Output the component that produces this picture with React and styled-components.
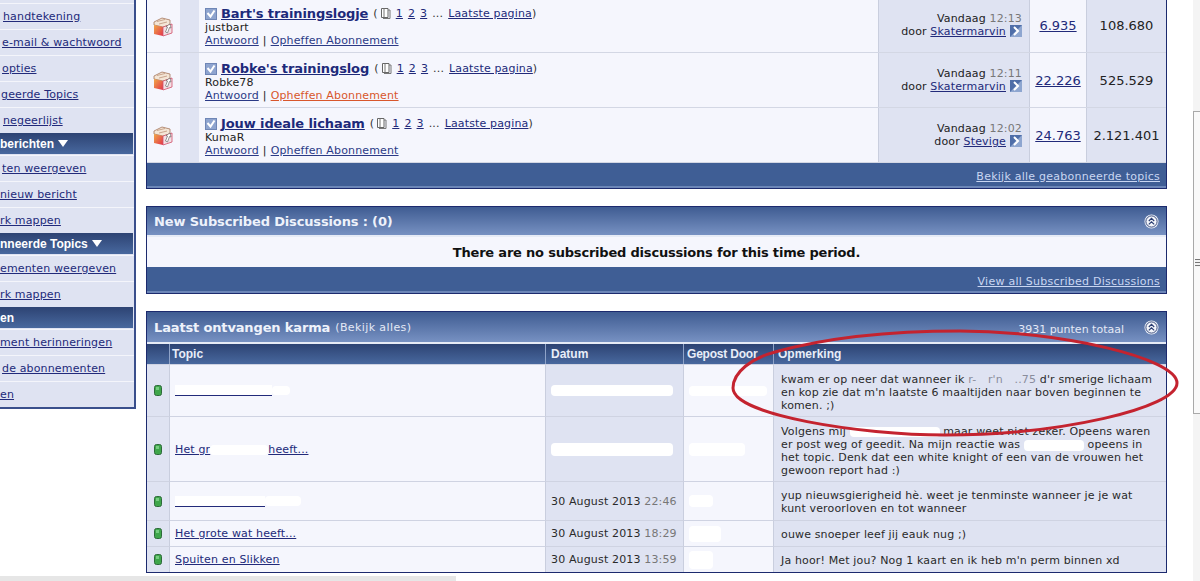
import React from 'react';
import styled, { createGlobalStyle } from 'styled-components';

const Global = createGlobalStyle`
  html, body { margin: 0; padding: 0; background: #fff; overflow: hidden; }
  body { font-family: "DejaVu Sans", Verdana, sans-serif; font-size: 11px; letter-spacing: 0.15px; color: #222; }
`;

const Page = styled.div`
  position: relative;
  width: 1200px;
  height: 581px;
  overflow: hidden;
  display: flex;
  align-items: flex-start;
  background: #fff;
`;

const Sidebar = styled.nav`
  width: 136px;
  flex: none;
  height: 409px;
  box-sizing: border-box;
  background: #dfe3f2;
  border-right: 2px solid #3a4f8c;
  border-bottom: 2px solid #3a4f8c;
  display: flex;
  flex-direction: column;
  padding-top: 3px;
`;

const SideLink = styled.a`
  height: 26px;
  flex: none;
  box-sizing: border-box;
  border-top: 1px solid #f4f5fb;
  padding: 6px 0 0 ${p => p.$indent || 0}px;
  color: #222a7a;
  text-decoration: underline;
  white-space: nowrap;
  overflow: hidden;
`;

const SideHead = styled.div`
  height: 21px;
  flex: none;
  margin: 0 1px 1px 0;
  box-sizing: border-box;
  padding-top: 4px;
  background: linear-gradient(#2d4373, #48689e);
  color: #fff;
  font-weight: bold;
  font-family: "Liberation Sans", Arial, sans-serif;
  font-size: 12px;
  letter-spacing: 0;
  white-space: nowrap;
  display: flex;
  align-items: flex-start;
`;

const Triangle = styled.span`
  width: 0;
  height: 0;
  margin: 3px 0 0 4px;
  border-left: 5px solid transparent;
  border-right: 5px solid transparent;
  border-top: 7px solid #fff;
`;

const Main = styled.main`
  width: 1021px;
  margin-left: 10px;
  flex: none;
  display: flex;
  flex-direction: column;
`;

const Panel = styled.section`
  border: 1px solid #1c2a6e;
  border-top-width: ${p => (p.$cut ? 0 : 1)}px;
  margin-bottom: ${p => p.$gap || 0}px;
  background: #f5f6fd;
`;

const TopicRow = styled.div`
  display: grid;
  grid-template-columns: 33px 19px 679px 151px 57px 80px;
  height: ${p => p.$h}px;
  border-bottom: 1px solid #d3d7e4;
  box-sizing: border-box;
`;

const Cell = styled.div`
  background: ${p => (p.$alt ? '#dfe3f2' : '#f5f6fd')};
  border-left: ${p => (p.$line ? '1px solid #c9cede' : 'none')};
  box-sizing: border-box;
  min-width: 0;
`;

const IconCell = styled(Cell)`
  display: flex;
  align-items: center;
  justify-content: center;
  padding: 2px 1px 0 0;
`;

const TitleCell = styled(Cell)`
  padding: ${p => p.$top}px 0 0 6px;
  line-height: 13px;
`;

const TitleLine = styled.div`
  display: flex;
  align-items: center;
  height: 15px;
  white-space: nowrap;
`;

const TopicTitle = styled.a`
  font-size: 13px;
  font-weight: bold;
  letter-spacing: -0.1px;
  color: #1d2a7a;
  text-decoration: underline;
  margin: 0 5px 0 4px;
`;

const Pages = styled.span`
  display: inline-flex;
  align-items: center;
  gap: 5px;
  color: #333;
  a { color: #222a7a; text-decoration: underline; }
`;

const RowLink = styled.a`
  color: ${p => (p.$hover ? '#d8562c' : '#2b3a86')};
  text-decoration: underline;
`;

const Sep = styled.span`
  margin: 0 4px;
  color: #222;
`;

const LastPost = styled(Cell)`
  text-align: right;
  padding: ${p => p.$top}px 7px 0 0;
  line-height: 13px;
  white-space: nowrap;
  a { color: #222a7a; text-decoration: underline; }
`;

const Time = styled.span`
  color: #777;
`;

const Num = styled(Cell)`
  display: flex;
  align-items: center;
  justify-content: center;
  padding: ${p => (p.$down ? '1px 0 0' : '0 0 1px')};
  font-size: 13px;
  letter-spacing: 0;
  a { color: #222a7a; text-decoration: underline; }
`;

const BlueFoot = styled.div`
  height: ${p => p.$h}px;
  box-sizing: border-box;
  background: #3f5e95;
  border-bottom: 2px solid #6c86b8;
  display: flex;
  align-items: center;
  justify-content: flex-end;
  padding: ${p => p.$top}px 6px 0 0;
  letter-spacing: 0.25px;
  a { color: #c9d6f2; text-decoration: underline; }
`;

const PanelHead = styled.header`
  height: ${p => p.$h}px;
  box-sizing: border-box;
  background: linear-gradient(#3f5c92, #7791c2);
  border-bottom: 2px solid #e6ebf6;
  display: flex;
  align-items: center;
  padding: ${p => p.$top || 0}px 7px 0;
  color: #fff;
`;

const HeadTitle = styled.strong`
  font-size: 13px;
  letter-spacing: -0.15px;
  color: #eef2fb;
`;

const HeadNote = styled.span`
  font-size: 11px;
  letter-spacing: 0.4px;
  color: #e4e9f6;
  margin-left: 5px;
`;

const HeadRight = styled.span`
  margin: 4px 20px 0 auto;
  letter-spacing: 0;
  color: #e4e9f6;
`;

const HeadTool = styled.span`
  margin-left: auto;
  display: flex;
`;

const EmptyMsg = styled.div`
  height: 30px;
  display: flex;
  align-items: center;
  justify-content: center;
  font-size: 13px;
  font-weight: bold;
  letter-spacing: -0.2px;
  color: #111;
  background: #f5f6fd;
`;

const KarmaGrid = styled.div`
  display: grid;
  grid-template-columns: 22px 376px 138px 90px 393px;
`;

const Th = styled.div`
  height: 20px;
  box-sizing: border-box;
  padding: 3px 0 0 ${p => p.$pad || 3}px;
  border-left: ${p => (p.$first ? 'none' : '1px solid #8fa3c8')};
  background: linear-gradient(#2d4373, #48689e);
  font-family: "Liberation Sans", Arial, sans-serif;
  font-size: 12px;
  font-weight: bold;
  letter-spacing: ${p => p.$tight || 0}px;
  color: #e8edf8;
  white-space: nowrap;
  overflow: hidden;
`;

const Td = styled.div`
  height: ${p => p.$h}px;
  box-sizing: border-box;
  background: ${p => (p.$alt ? '#dfe3f2' : '#f5f6fd')};
  border-top: 1px solid #cfd3e2;
  border-left: ${p => (p.$first ? 'none' : '1px solid #c9cede')};
  display: flex;
  align-items: center;
  padding: 0 5px;
  white-space: nowrap;
  overflow: hidden;
  color: #2a2a2a;
`;

const Status = styled(Td)`
  padding: 0 0 0 7px;
`;

const Comment = styled(Td)`
  display: block;
  white-space: normal;
  line-height: 13px;
  padding: ${p => p.$top}px 5px 0 7px;
`;

const TopicLink = styled.a`
  color: #222a7a;
  text-decoration: underline;
`;

const Redact = styled.span`
  display: inline-block;
  width: ${p => p.$w}px;
  height: ${p => p.$h || 11}px;
  background: #fff;
  border-radius: 4px;
  vertical-align: middle;
`;

const UnderlinedRedact = styled(Redact)`
  border-radius: 0;
  border-bottom: 1px solid #222a7a;
`;

const Faint = styled.span`
  color: #8a8d9c;
  word-spacing: 8px;
`;

const ScrollTrack = styled.div`
  position: absolute;
  left: 1193px;
  top: 0;
  bottom: 0;
  width: 7px;
  background: #f4f4f4;
`;

const ScrollThumb = styled.div`
  position: absolute;
  left: 0;
  top: 111px;
  width: 7px;
  height: 303px;
  box-sizing: border-box;
  background: #f9f9f9;
  border: 1px solid #a9a9a9;
  border-right: 0;
`;

const ScrollGrip = styled.div`
  position: absolute;
  left: 1px;
  top: 147px;
  width: 5px;
  height: 8px;
  background: repeating-linear-gradient(#777 0 1px, #f3f3f3 1px 3px);
`;

const ScrollH = styled.div`
  position: absolute;
  left: 0;
  top: 576px;
  width: 456px;
  height: 5px;
  background: #e6e6e6;
`;

const Ellipse = styled.svg`
  position: absolute;
  left: 0;
  top: 0;
  width: 1200px;
  height: 581px;
  pointer-events: none;
`;

function TopicIcon() {
  return (
    <svg width="20" height="20" viewBox="0 0 20 20">
      <defs>
        <linearGradient id="boxFace" x1="0" y1="0" x2="1" y2="1">
          <stop offset="0" stopColor="#f0a848" />
          <stop offset="1" stopColor="#e2334a" />
        </linearGradient>
      </defs>
      <path d="M1 5 L9 1 L17 3 L17 8 L10 10 L1 8 Z" fill="#f4e6d6" stroke="#a5765c" strokeWidth="0.8" />
      <path d="M4 4.5 L12 2.5 M6 7 L14 5" stroke="#b78a6e" strokeWidth="0.7" />
      <path d="M1 8 L10 10 L10 19 L1 17 Z" fill="url(#boxFace)" />
      <path d="M10 10 L19 7 L19 16 L10 19 Z" fill="#f3dfe4" stroke="#d0506a" strokeWidth="0.8" />
      <path d="M12.5 15 L14.5 10 L13 9.5 L17 7 L18 11 L16.5 10.5 L14.5 16 Z" fill="#fff" stroke="#555" strokeWidth="0.6" />
    </svg>
  );
}

function CheckBox() {
  return (
    <svg width="12" height="12" viewBox="0 0 12 12">
      <rect x="0.5" y="0.5" width="11" height="11" fill="#8ea4cf" stroke="#6f86b6" />
      <path d="M2.5 5 L5.5 8.5 L9.5 2.5" fill="none" stroke="#fff" strokeWidth="2" />
    </svg>
  );
}

function PagesIcon() {
  return (
    <svg width="12" height="12" viewBox="0 0 12 12" style={{ verticalAlign: -2, marginLeft: 1 }}>
      <path d="M2.5 1.5 H9 V10.5 H2.5 Z" fill="#fff" stroke="#666" />
      <path d="M5 1.5 V10.5 M9 3 H11 V11.5 H4" fill="none" stroke="#777" />
    </svg>
  );
}

function GoIcon() {
  return (
    <svg width="12" height="12" viewBox="0 0 12 12" style={{ verticalAlign: -2, marginLeft: 4 }}>
      <rect width="12" height="12" fill="#4f6ea8" />
      <path d="M0 12 L12 0 V12 Z" fill="#8ea6d0" />
      <path d="M4 2 L8 6 L4 10" fill="none" stroke="#fff" strokeWidth="2" />
    </svg>
  );
}

function CollapseIcon() {
  return (
    <svg width="15" height="15" viewBox="0 0 15 15">
      <circle cx="7.5" cy="7.5" r="7" fill="#e9eef7" />
      <circle cx="7.5" cy="7.5" r="5.6" fill="#f4f6fb" stroke="#2a3d72" strokeWidth="0.9" />
      <path d="M4.8 7 L7.5 4.4 L10.2 7 M4.8 10.4 L7.5 7.8 L10.2 10.4" fill="none" stroke="#2a3d72" strokeWidth="1.2" />
    </svg>
  );
}

function Led() {
  return (
    <svg width="8" height="11" viewBox="0 0 8 11">
      <rect x="0.5" y="0.5" width="7" height="10" rx="2" fill="#3fa64b" stroke="#2d6b3a" />
      <rect x="2" y="2" width="3" height="3" fill="#76cc80" />
    </svg>
  );
}

const topics = [
  { title: "Bart's trainingslogje", by: 'justbart', time: '12:13', user: 'Skatermarvin', replies: '6.935', views: '108.680', h: 53, top: 6, lastTop: 12 },
  { title: "Robke's trainingslog", by: 'Robke78', time: '12:11', user: 'Skatermarvin', replies: '22.226', views: '525.529', h: 55, top: 8, lastTop: 14, hover: true, down: true },
  { title: 'Jouw ideale lichaam', by: 'KumaR', time: '12:02', user: 'Stevige', replies: '24.763', views: '2.121.401', h: 55, top: 8, lastTop: 14, down: true },
];

export default function App() {
  return (
    <Page>
      <Global />
      <Sidebar>
        <SideLink $indent={3}>handtekening</SideLink>
        <SideLink $indent={2}>e-mail &amp; wachtwoord</SideLink>
        <SideLink $indent={2}>opties</SideLink>
        <SideLink $indent={1}>geerde Topics</SideLink>
        <SideLink $indent={3}>negeerlijst</SideLink>
        <SideHead>berichten<Triangle /></SideHead>
        <SideLink $indent={2}>ten weergeven</SideLink>
        <SideLink>nieuw bericht</SideLink>
        <SideLink>rk mappen</SideLink>
        <SideHead>nneerde Topics<Triangle /></SideHead>
        <SideLink>ementen weergeven</SideLink>
        <SideLink>rk mappen</SideLink>
        <SideHead>en</SideHead>
        <SideLink>ment herinneringen</SideLink>
        <SideLink $indent={2}>de abonnementen</SideLink>
        <SideLink>en</SideLink>
      </Sidebar>

      <Main>
        <Panel $cut $gap={17}>
          {topics.map(t => (
            <TopicRow key={t.title} $h={t.h}>
              <IconCell><TopicIcon /></IconCell>
              <Cell $alt />
              <TitleCell $top={t.top}>
                <TitleLine>
                  <CheckBox />
                  <TopicTitle>{t.title}</TopicTitle>
                  <Pages>
                    <span>(<PagesIcon /></span>
                    <a>1</a><a>2</a><a>3</a>
                    <span>...</span>
                    <span><a>Laatste pagina</a>)</span>
                  </Pages>
                </TitleLine>
                <div>{t.by}</div>
                <div>
                  <RowLink>Antwoord</RowLink>
                  <Sep>|</Sep>
                  <RowLink $hover={t.hover}>Opheffen Abonnement</RowLink>
                </div>
              </TitleCell>
              <LastPost $alt $line $top={t.lastTop}>
                <div>Vandaag <Time>{t.time}</Time></div>
                <div>door <a>{t.user}</a><GoIcon /></div>
              </LastPost>
              <Num $line $down={t.down}><a>{t.replies}</a></Num>
              <Num $alt $line $down={t.down}>{t.views}</Num>
            </TopicRow>
          ))}
          <BlueFoot $h={25} $top={3}><a>Bekijk alle geabonneerde topics</a></BlueFoot>
        </Panel>

        <Panel $gap={17}>
          <PanelHead $h={30} $top={1}>
            <HeadTitle>New Subscribed Discussions : (0)</HeadTitle>
            <HeadTool><CollapseIcon /></HeadTool>
          </PanelHead>
          <EmptyMsg>There are no subscribed discussions for this time period.</EmptyMsg>
          <BlueFoot $h={26} $top={5}><a>View all Subscribed Discussions</a></BlueFoot>
        </Panel>

        <Panel>
          <PanelHead $h={32}>
            <HeadTitle>Laatst ontvangen karma</HeadTitle>
            <HeadNote>(Bekijk alles)</HeadNote>
            <HeadRight>3931 punten totaal</HeadRight>
            <CollapseIcon />
          </PanelHead>
          <KarmaGrid>
            <Th $first />
            <Th $pad={2}>Topic</Th>
            <Th $pad={5}>Datum</Th>
            <Th $tight={-0.2}>Gepost Door</Th>
            <Th $pad={4}>Opmerking</Th>

            <Status $alt $first $h={52}><Led /></Status>
            <Td $h={52}><UnderlinedRedact $w={97} $h={10} /><Redact $w={18} $h={9} /></Td>
            <Td $alt $h={52}><Redact $w={122} $h={11} /></Td>
            <Td $h={52}><Redact $w={78} $h={10} /></Td>
            <Comment $alt $h={52} $top={8}>
              kwam er op neer dat wanneer ik <Faint>r- r'n ..75</Faint> d'r smerige lichaam en kop zie dat m'n laatste 6 maaltijden naar boven beginnen te komen. ;)
            </Comment>

            <Status $alt $first $h={65}><Led /></Status>
            <Td $h={65}><TopicLink>Het gr<Redact $w={58} $h={10} />heeft...</TopicLink></Td>
            <Td $alt $h={65}><Redact $w={122} $h={13} /></Td>
            <Td $h={65}><Redact $w={56} $h={13} /></Td>
            <Comment $alt $h={65} $top={8}>
              Volgens mij <Redact $w={90} $h={10} /> maar weet niet zeker. Opeens waren er post weg of geedit. Na mijn reactie was <Redact $w={60} $h={11} /> opeens in het topic. Denk dat een white knight of een van de vrouwen het gewoon report had :)
            </Comment>

            <Status $alt $first $h={39}><Led /></Status>
            <Td $h={39}><UnderlinedRedact $w={90} $h={10} /><Redact $w={36} $h={10} /></Td>
            <Td $alt $h={39}>30 August 2013&nbsp;<Time>22:46</Time></Td>
            <Td $h={39}><Redact $w={24} $h={12} /></Td>
            <Comment $alt $h={39} $top={7}>yup nieuwsgierigheid hè. weet je tenminste wanneer je je wat kunt veroorloven en tot wanneer</Comment>

            <Status $alt $first $h={26}><Led /></Status>
            <Td $h={26}><TopicLink>Het grote wat heeft...</TopicLink></Td>
            <Td $alt $h={26}>30 August 2013&nbsp;<Time>18:29</Time></Td>
            <Td $h={26}><Redact $w={32} $h={16} /></Td>
            <Comment $alt $h={26} $top={7}>ouwe snoeper leef jij eauk nug ;)</Comment>

            <Status $alt $first $h={26}><Led /></Status>
            <Td $h={26}><TopicLink>Spuiten en Slikken</TopicLink></Td>
            <Td $alt $h={26}>30 August 2013&nbsp;<Time>13:59</Time></Td>
            <Td $h={26}><Redact $w={24} $h={18} /></Td>
            <Comment $alt $h={26} $top={7}>Ja hoor! Met jou? Nog 1 kaart en ik heb m'n perm binnen xd</Comment>
          </KarmaGrid>
        </Panel>
      </Main>

      <Ellipse viewBox="0 0 1200 581">
        <path
          d="M775 352 C825 338 890 331 960 331 C1060 331 1177 358 1177 383 C1177 408 1060 435 945 435 C860 435 733 415 733 388 C733 372 752 358 775 352 Z"
          fill="none"
          stroke="#c4232f"
          strokeWidth="3"
        />
      </Ellipse>
      <ScrollTrack>
        <ScrollThumb><ScrollGrip /></ScrollThumb>
      </ScrollTrack>
      <ScrollH />
    </Page>
  );
}
